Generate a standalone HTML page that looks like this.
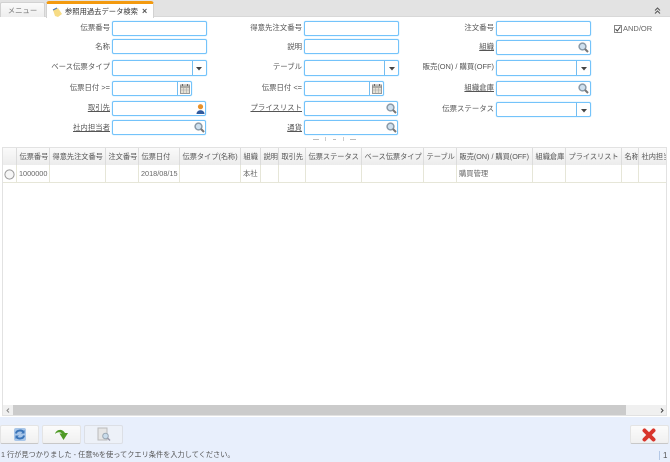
<!DOCTYPE html>
<html><head><meta charset="utf-8">
<style>
html,body{margin:0;padding:0}
body{width:670px;height:462px;position:relative;overflow:hidden;background:#fff;font-family:"Liberation Sans","Noto Sans CJK JP",sans-serif;font-size:7.4px;color:#555}
div,svg{position:absolute;box-sizing:border-box}
#w{left:0;top:0;width:670px;height:462px;filter:blur(.3px);overflow:hidden;background:#fff}
.l{text-align:right;white-space:nowrap;height:12px;line-height:12px;font-size:7.4px;color:#555}
.u{text-decoration:underline}
.f{border:1px solid #74c3fa;border-radius:2px;background:#fff;box-shadow:0 0 1px #8fd2ff}
.d{position:absolute;top:0;bottom:0;width:1px;background:#74bdf0}
.h{top:148px;height:17px;line-height:18px;font-size:7.2px;color:#555;padding-left:2.5px;white-space:nowrap;overflow:hidden;background:linear-gradient(#fafafa,#ececec);border-right:1px solid #dcdcdc}
.c{top:165px;height:18px;line-height:18px;font-size:7.3px;color:#666;white-space:nowrap;overflow:hidden;padding-left:2px;border-right:1px solid #e6e6d8;border-bottom:1px solid #e6e6d8;background:#fff}
.b{top:425px;height:19px;border-radius:2px;background:linear-gradient(#fbfbfb,#f0f0f0);border:1px solid #e4e4e4;border-bottom:1px solid #c8c8c8}
</style></head><body><div id="w">

<div style="left:0;top:0;width:670px;height:17px;background:#e3e3e3;border-bottom:1px solid #d8d8d8"></div>
<div style="left:0;top:2px;width:45px;height:15px;background:linear-gradient(#fafafa,#eeeeee);border:1px solid #d2d2d2;border-bottom:0;border-radius:2px 2px 0 0;text-align:center;line-height:16px;font-size:7.4px;color:#777">メニュー</div>
<div style="left:46px;top:1px;width:108px;height:17px;background:#fff;border-top:3px solid #f39a0f;border-radius:3px 3px 0 0;border-right:1px solid #d2d2d2;border-left:1px solid #d2d2d2"></div>
<svg style="left:52px;top:7px" width="11" height="11" viewBox="0 0 11 11"><path d="M1 3 L6 1 L10 7 L6 10 L3 9Z" fill="#f7dc85"/><path d="M1 3 L5 1" stroke="#4a78b5" stroke-width="1.2"/></svg>
<div style="left:65px;top:5.500px;height:12px;line-height:12px;font-size:7.3px;color:#333;white-space:nowrap">参照用過去データ検索</div>
<div style="left:142px;top:5px;height:12px;line-height:12px;font-size:9px;color:#555;font-weight:bold">×</div>
<svg style="left:654px;top:7px" width="7" height="7" viewBox="0 0 7 7"><path d="M1 3.500 L3.500 1 L6 3.500 M1 6.500 L3.500 4 L6 6.500" fill="none" stroke="#555" stroke-width="1"/></svg>

<!-- column 1 -->
<div class="l" style="left:40px;width:70px;top:22px">伝票番号</div>
<div class="f" style="left:112px;top:21px;width:95px;height:15px"></div>
<div class="l" style="left:40px;width:70px;top:41px">名称</div>
<div class="f" style="left:112px;top:39px;width:95px;height:15px"></div>
<div class="l" style="left:40px;width:70px;top:61px">ベース伝票タイプ</div>
<div class="f" style="left:112px;top:60px;width:95px;height:16px"><div class="d" style="left:79px"></div><svg style="left:83px;top:6px" width="6" height="4"><path d="M0 0H6L3 3.500Z" fill="#444"/></svg></div>
<div class="l" style="left:40px;width:70px;top:82px">伝票日付 &gt;=</div>
<div class="f" style="left:112px;top:81px;width:80px;height:15px"><div class="d" style="left:64px"></div><svg style="left:67px;top:2px" width="10" height="10" viewBox="0 0 10 10"><rect x=".5" y="1" width="9" height="8.500" fill="#e4e0d4" stroke="#999"/><path d="M.5 3H9.500" stroke="#777"/><path d="M2.500 0V2M7.500 0V2" stroke="#666"/><path d="M3.500 3V9M6.500 3V9M.5 6H9.500" stroke="#aaa" stroke-width=".6"/></svg></div>
<div class="l u" style="left:40px;width:70px;top:102px">取引先</div>
<div class="f" style="left:112px;top:101px;width:94px;height:15px"><svg style="left:83px;top:2px" width="9" height="10" viewBox="0 0 9 10"><circle cx="4.500" cy="2.700" r="2.600" fill="#e8912a"/><path d="M.5 10C.5 5 8.500 5 8.500 10Z" fill="#2f5a9e"/></svg></div>
<div class="l u" style="left:40px;width:70px;top:122px">社内担当者</div>
<div class="f" style="left:112px;top:120px;width:94px;height:15px"><svg style="left:81px;top:1px" width="11" height="11" viewBox="0 0 11 11"><circle cx="4.500" cy="4.500" r="3.400" fill="#cfe0ee" stroke="#8a9aa8" stroke-width="1.500"/><path d="M7 7L10 10" stroke="#777" stroke-width="2"/></svg></div>

<!-- column 2 -->
<div class="l" style="left:220px;width:82px;top:22px">得意先注文番号</div>
<div class="f" style="left:304px;top:21px;width:95px;height:15px"></div>
<div class="l" style="left:220px;width:82px;top:41px">説明</div>
<div class="f" style="left:304px;top:39px;width:95px;height:15px"></div>
<div class="l" style="left:220px;width:82px;top:61px">テーブル</div>
<div class="f" style="left:304px;top:60px;width:95px;height:16px"><div class="d" style="left:79px"></div><svg style="left:84px;top:6px" width="6" height="4"><path d="M0 0H6L3 3.500Z" fill="#444"/></svg></div>
<div class="l" style="left:220px;width:82px;top:82px">伝票日付 &lt;=</div>
<div class="f" style="left:304px;top:81px;width:80px;height:15px"><div class="d" style="left:64px"></div><svg style="left:67px;top:2px" width="10" height="10" viewBox="0 0 10 10"><rect x=".5" y="1" width="9" height="8.500" fill="#e4e0d4" stroke="#999"/><path d="M.5 3H9.500" stroke="#777"/><path d="M2.500 0V2M7.500 0V2" stroke="#666"/><path d="M3.500 3V9M6.500 3V9M.5 6H9.500" stroke="#aaa" stroke-width=".6"/></svg></div>
<div class="l u" style="left:220px;width:82px;top:102px">プライスリスト</div>
<div class="f" style="left:304px;top:101px;width:94px;height:15px"><svg style="left:81px;top:1px" width="11" height="11" viewBox="0 0 11 11"><circle cx="4.500" cy="4.500" r="3.400" fill="#cfe0ee" stroke="#8a9aa8" stroke-width="1.500"/><path d="M7 7L10 10" stroke="#777" stroke-width="2"/></svg></div>
<div class="l u" style="left:220px;width:82px;top:122px">通貨</div>
<div class="f" style="left:304px;top:120px;width:94px;height:15px"><svg style="left:81px;top:1px" width="11" height="11" viewBox="0 0 11 11"><circle cx="4.500" cy="4.500" r="3.400" fill="#cfe0ee" stroke="#8a9aa8" stroke-width="1.500"/><path d="M7 7L10 10" stroke="#777" stroke-width="2"/></svg></div>

<!-- column 3 -->
<div class="l" style="left:410px;width:84px;top:22px">注文番号</div>
<div class="f" style="left:496px;top:21px;width:95px;height:15px"></div>
<div class="l u" style="left:410px;width:84px;top:41px">組織</div>
<div class="f" style="left:496px;top:40px;width:95px;height:15px"><svg style="left:81px;top:1px" width="11" height="11" viewBox="0 0 11 11"><circle cx="4.500" cy="4.500" r="3.400" fill="#cfe0ee" stroke="#8a9aa8" stroke-width="1.500"/><path d="M7 7L10 10" stroke="#777" stroke-width="2"/></svg></div>
<div class="l" style="left:410px;width:84px;top:61px">販売(ON) / 購買(OFF)</div>
<div class="f" style="left:496px;top:60px;width:95px;height:16px"><div class="d" style="left:79px"></div><svg style="left:84px;top:6px" width="6" height="4"><path d="M0 0H6L3 3.500Z" fill="#444"/></svg></div>
<div class="l u" style="left:410px;width:84px;top:82px">組織倉庫</div>
<div class="f" style="left:496px;top:81px;width:95px;height:15px"><svg style="left:81px;top:1px" width="11" height="11" viewBox="0 0 11 11"><circle cx="4.500" cy="4.500" r="3.400" fill="#cfe0ee" stroke="#8a9aa8" stroke-width="1.500"/><path d="M7 7L10 10" stroke="#777" stroke-width="2"/></svg></div>
<div class="l" style="left:410px;width:84px;top:103px">伝票ステータス</div>
<div class="f" style="left:496px;top:102px;width:95px;height:15px"><div class="d" style="left:79px"></div><svg style="left:84px;top:6px" width="6" height="4"><path d="M0 0H6L3 3.500Z" fill="#444"/></svg></div>

<svg style="left:614px;top:25px" width="8" height="8" viewBox="0 0 8 8"><rect x=".5" y=".5" width="7" height="7" fill="#fff" stroke="#888"/><path d="M1.500 4L3.300 6L6.500 1.500" fill="none" stroke="#444" stroke-width="1"/></svg>
<div style="left:623px;top:22px;height:12px;line-height:13px;font-size:7.500px;color:#666">AND/OR</div>

<!-- splitter -->
<div style="left:313px;top:139px;width:6px;height:1px;background:#bbb"></div>
<div style="left:325px;top:137px;width:1px;height:4px;background:#ccc"></div>
<div style="left:333px;top:139px;width:3px;height:1px;background:#bbb"></div>
<div style="left:343px;top:137px;width:1px;height:4px;background:#ccc"></div>
<div style="left:350px;top:139px;width:6px;height:1px;background:#bbb"></div>

<!-- grid -->
<div style="left:2px;top:147px;width:665px;height:269px;border:1px solid #e2e2e2;background:#fff"></div>
<div class="h" style="left:3px;width:14px"></div>
<div class="h" style="left:17px;width:33px">伝票番号</div>
<div class="h" style="left:50px;width:56px">得意先注文番号</div>
<div class="h" style="left:106px;width:33px">注文番号</div>
<div class="h" style="left:139px;width:41px">伝票日付</div>
<div class="h" style="left:180px;width:61px">伝票タイプ(名称)</div>
<div class="h" style="left:241px;width:20px">組織</div>
<div class="h" style="left:261px;width:18px">説明</div>
<div class="h" style="left:279px;width:27px">取引先</div>
<div class="h" style="left:306px;width:56px">伝票ステータス</div>
<div class="h" style="left:362px;width:62px">ベース伝票タイプ</div>
<div class="h" style="left:424px;width:33px">テーブル</div>
<div class="h" style="left:457px;width:76px">販売(ON) / 購買(OFF)</div>
<div class="h" style="left:533px;width:33px">組織倉庫</div>
<div class="h" style="left:566px;width:56px">プライスリスト</div>
<div class="h" style="left:622px;width:17px">名称</div>
<div class="h" style="left:639px;width:27px;border-right:0">社内担当者</div>

<div class="c" style="left:3px;width:14px"></div>
<svg style="left:4px;top:169px" width="11" height="11" viewBox="0 0 11 11"><circle cx="5.500" cy="5.500" r="4.600" fill="#f6f6f6" stroke="#999"/></svg>
<div class="c" style="left:17px;width:33px">1000000</div>
<div class="c" style="left:50px;width:56px"></div>
<div class="c" style="left:106px;width:33px"></div>
<div class="c" style="left:139px;width:41px">2018/08/15</div>
<div class="c" style="left:180px;width:61px"></div>
<div class="c" style="left:241px;width:20px">本社</div>
<div class="c" style="left:261px;width:18px"></div>
<div class="c" style="left:279px;width:27px"></div>
<div class="c" style="left:306px;width:56px"></div>
<div class="c" style="left:362px;width:62px"></div>
<div class="c" style="left:424px;width:33px"></div>
<div class="c" style="left:457px;width:76px">購買管理</div>
<div class="c" style="left:533px;width:33px"></div>
<div class="c" style="left:566px;width:56px"></div>
<div class="c" style="left:622px;width:17px"></div>
<div class="c" style="left:639px;width:27px;border-right:0"></div>

<!-- scrollbar -->
<div style="left:3px;top:405px;width:663px;height:10px;background:#f0f0f0"></div>
<div style="left:13px;top:405px;width:613px;height:10px;background:#cbcbcb"></div>
<svg style="left:6px;top:408px" width="4" height="5"><path d="M3 .5L1 2.500L3 4.500" fill="none" stroke="#888"/></svg>
<svg style="left:660px;top:408px" width="4" height="5"><path d="M1 .5L3 2.500L1 4.500" fill="none" stroke="#444"/></svg>

<!-- bottom -->
<div style="left:0;top:417px;width:670px;height:45px;background:#e8effc"></div>
<div class="b" style="left:0;width:39px"></div>
<svg style="left:13px;top:427px" width="14" height="15" viewBox="0 0 14 15"><rect x="1" y="1" width="12" height="13" rx="2" fill="#a9c6e8"/><path d="M3 6.500C3.500 3 9 2.500 11 5.500M11 8.500C10.500 12 5 12.500 3 9.500" fill="none" stroke="#3a74b8" stroke-width="2"/><path d="M11.500 3V6.500H8M2.500 12V8.500H6" fill="#3a74b8"/></svg>
<div class="b" style="left:42px;width:39px"></div>
<svg style="left:54px;top:428px" width="15" height="13" viewBox="0 0 15 13"><path d="M1 6C2 1.500 8 0 11 5L14 5L9.500 12L5.500 5.500L8 5.500C6 3.500 3 4 1 6Z" fill="#4f9a26"/></svg>
<div class="b" style="left:84px;width:39px;background:#edf1f8;border-color:#dcdfe5"></div>
<svg style="left:97px;top:427px" width="14" height="15" viewBox="0 0 14 15"><rect x="1" y="1" width="9" height="12" fill="#e6e6e6" stroke="#bbb"/><circle cx="8.500" cy="9" r="2.800" fill="#c9dcec" stroke="#9aa8b4"/><path d="M10.500 11L13 13.500" stroke="#99a" stroke-width="1.500"/></svg>
<div class="b" style="left:630px;width:39px"></div>
<svg style="left:642px;top:428px" width="14" height="14" viewBox="0 0 14 14"><path d="M2.500 2.500L11.500 11.500M11.500 2.500L2.500 11.500" stroke="#d8352c" stroke-width="4" stroke-linecap="round"/></svg>
<div style="left:1px;top:449px;height:12px;line-height:12px;font-size:7.200px;color:#555;white-space:nowrap">1 行が見つかりました - 任意%を使ってクエリ条件を入力してください。</div>
<div style="left:659px;top:451px;width:1px;height:9px;background:#b4c8e6"></div>
<div style="left:663px;top:450px;height:12px;line-height:12px;font-size:8px;color:#555">1</div>
</div></body></html>
